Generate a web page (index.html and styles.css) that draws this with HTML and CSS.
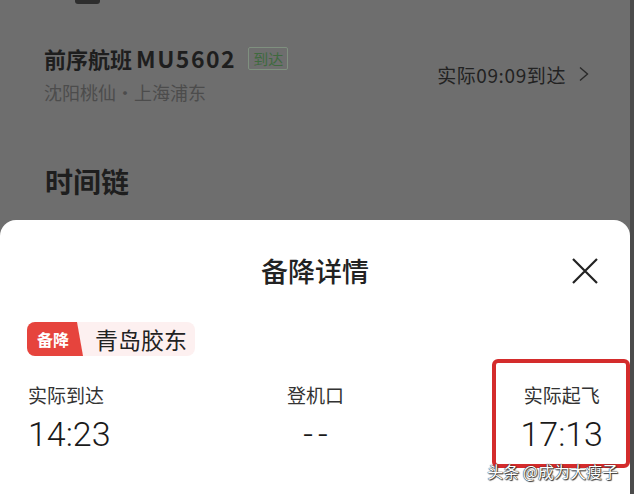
FILE: index.html
```html
<!DOCTYPE html>
<html lang="zh-CN">
<head>
    <meta charset="UTF-8">
    <meta name="viewport" content="width=device-width, initial-scale=1.0">
    <title>备降详情</title>
    <link rel="stylesheet" href="styles.css">
</head>
<body>
    <div class="screen">
        <!-- Page behind the sheet (dimmed) -->
        <div class="backdrop">
            <div class="notch"></div>

            <div class="prev">
                <div class="prev-left">
                    <div class="prev-title">前序航班<span class="flight-no">MU5602</span><span class="badge">到达</span></div>
                    <div class="prev-route">沈阳桃仙·上海浦东</div>
                </div>
                <div class="prev-right">
                    实际09:09到达
                    <svg width="12" height="16" viewBox="0 0 12 16"><path d="M2 1.5 L9.5 8 L2 14.5" fill="none" stroke="#2a2a2a" stroke-width="1.4"/></svg>
                </div>
            </div>

            <h2 class="chain">时间链</h2>
        </div>

        <!-- Bottom sheet -->
        <div class="sheet">
            <div class="sheet-head">
                <h1>备降详情</h1>
                <button class="close" aria-label="关闭">
                    <svg width="28" height="26" viewBox="0 0 28 26"><path d="M2 1 L26 25 M26 1 L2 25" stroke="#222" stroke-width="2.2" fill="none"/></svg>
                </button>
            </div>

            <div class="airport">
                <span class="tag">备降</span>
                <span class="airport-name">青岛胶东</span>
            </div>

            <div class="times">
                <div class="col">
                    <div class="label">实际到达</div>
                    <div class="value">14:23</div>
                </div>
                <div class="col col-center">
                    <div class="label">登机口</div>
                    <div class="value dash">--</div>
                </div>
                <div class="col col-center marked">
                    <div class="label">实际起飞</div>
                    <div class="value">17:13</div>
                </div>
            </div>
        </div>

        <div class="watermark">头条 @成为大瘦子</div>
    </div>
</body>
</html>
```

FILE: styles.css
```css
body {
    margin: 0;
    padding: 0;
    font-family: "Noto Sans CJK SC", "Noto Sans", sans-serif;
    background: #4c4c4c;
}

.screen {
    position: relative;
    width: 630px;
    height: 494px;
    overflow: hidden;
    background: #6e6e6e;
}

/* Dimmed page */
.backdrop {
    height: 220px;
    padding: 0 44px;
    box-sizing: border-box;
    color: #1e1e1e;
}

.notch {
    width: 25px;
    height: 4px;
    margin-left: 31px;
    background: #2e2e2e;
    border-radius: 0 0 3px 3px;
}

.prev {
    display: flex;
    justify-content: space-between;
    align-items: center;
    margin-top: 39px;
}

.prev-title {
    display: flex;
    align-items: center;
    font-size: 22px;
    font-weight: 700;
    line-height: 30px;
}

.flight-no {
    margin-left: 4px;
    font-size: 23px;
    letter-spacing: 1.5px;
}

.badge {
    margin-left: 12px;
    padding: 0 4px;
    font-size: 15px;
    font-weight: 400;
    line-height: 21px;
    letter-spacing: 0;
    color: #3f6a3f;
    border: 1px solid #7f907f;
    border-radius: 2px;
}

.prev-route {
    font-size: 18px;
    line-height: 26px;
    color: #4c4c4c;
    margin-top: 6px;
}

.prev-right {
    display: flex;
    align-items: center;
    gap: 12px;
    margin-right: -4px;
    font-size: 19px;
    letter-spacing: 0.6px;
    color: #222;
}

.chain {
    margin: 57px 0 0 1px;
    font-size: 28px;
    line-height: 38px;
    font-weight: 700;
}

/* Sheet */
.sheet {
    height: 274px;
    background: #fff;
    border-radius: 16px 16px 0 0;
    color: #222;
}

.sheet-head {
    display: grid;
    grid-template-columns: 1fr auto 1fr;
    align-items: center;
    padding: 33px 31px 0;
}

.sheet-head h1 {
    grid-column: 2;
    margin: 0;
    font-size: 27px;
    line-height: 36px;
    font-weight: 500;
}

.close {
    justify-self: end;
    padding: 0;
    border: none;
    background: none;
    display: flex;
}

.airport {
    display: inline-flex;
    align-items: center;
    height: 34px;
    margin: 33px 0 0 27px;
    padding-right: 8px;
    background: #fdf0f0;
    border-radius: 8px;
}

.tag {
    width: 56px;
    height: 34px;
    padding-left: 10px;
    box-sizing: border-box;
    background: #e6443d;
    border-radius: 8px 0 0 8px;
    clip-path: polygon(0 0, 50px 0, 56px 100%, 0 100%);
    color: #fff;
    font-size: 16px;
    font-weight: 700;
    line-height: 34px;
}

.airport-name {
    margin-left: 12px;
    font-size: 23px;
    color: #222;
}

.times {
    display: flex;
    justify-content: space-between;
    padding: 0 27px 0 28px;
    margin-top: 26px;
}

.col-center {
    text-align: center;
}

.marked {
    position: relative;
}

.marked::after {
    content: "";
    position: absolute;
    top: -23px;
    bottom: -14px;
    left: -28px;
    right: -27px;
    border: 4px solid #d42c2c;
    border-radius: 6px;
}

.label {
    font-size: 19px;
    line-height: 26px;
    color: #333;
}

.value {
    margin-top: 6px;
    font-family: Roboto, "Noto Sans", sans-serif;
    font-size: 34px;
    line-height: 40px;
    font-weight: 300;
    color: #1a1a1a;
}

.dash {
    letter-spacing: 5px;
    padding-left: 5px;
}

.watermark {
    position: absolute;
    right: 12px;
    bottom: 12px;
    font-size: 16px;
    line-height: 22px;
    color: #fff;
    text-shadow: 0 0 1px #222, 0 0 1px #222, 1px 1px 1px #333;
}
```
